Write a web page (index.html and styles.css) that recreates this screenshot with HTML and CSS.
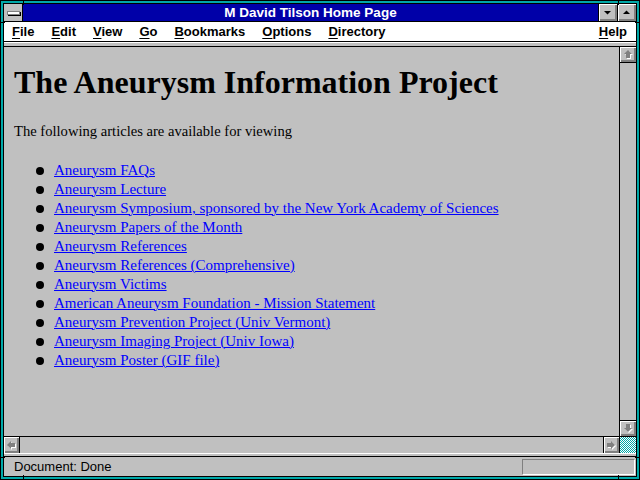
FILE: index.html
```html
<!DOCTYPE html>
<html lang="en">
  <head>
    <meta charset="UTF-8" />
    <title>M David Tilson Home Page</title>
    <link rel="stylesheet" href="styles.css">
  </head>
  <body>
    <div class="window">
      <span class="notch notch--top notch--left"></span>
      <span class="notch notch--top notch--right"></span>
      <span class="notch notch--bottom notch--left"></span>
      <span class="notch notch--bottom notch--right"></span>
      <span class="notch notch--side notch--upper notch--west"></span>
      <span class="notch notch--side notch--upper notch--east"></span>
      <span class="notch notch--side notch--lower notch--west"></span>
      <span class="notch notch--side notch--lower notch--east"></span>

      <div class="frame">
        <header class="titlebar">
          <div class="sysmenu"><span class="sysmenu__bar"></span></div>
          <div class="titlebar__title">M David Tilson Home Page</div>
          <div class="titlebar__btn">
            <svg width="18" height="17" viewBox="0 0 18 17"><polygon points="5,7 12,7 8.5,10.5" fill="#000"/></svg>
          </div>
          <div class="titlebar__btn">
            <svg width="18" height="17" viewBox="0 0 18 17"><polygon points="5,10 12,10 8.5,6.5" fill="#000"/></svg>
          </div>
        </header>

        <nav class="menubar">
          <span class="menubar__item"><u>F</u>ile</span>
          <span class="menubar__item"><u>E</u>dit</span>
          <span class="menubar__item"><u>V</u>iew</span>
          <span class="menubar__item"><u>G</u>o</span>
          <span class="menubar__item"><u>B</u>ookmarks</span>
          <span class="menubar__item"><u>O</u>ptions</span>
          <span class="menubar__item"><u>D</u>irectory</span>
          <span class="menubar__item menubar__item--help"><u>H</u>elp</span>
        </nav>
        <div class="toolbar_sep"></div>

        <div class="viewport">
          <main class="page">
            <h1 class="page__heading">The Aneurysm Information Project</h1>
            <p class="page__intro">The following articles are available for viewing</p>
            <ul class="page__list">
              <li class="page__item"><a class="page__link" href="#">Aneurysm FAQs</a></li>
              <li class="page__item"><a class="page__link" href="#">Aneurysm Lecture</a></li>
              <li class="page__item"><a class="page__link" href="#">Aneurysm Symposium, sponsored by the New York Academy of Sciences</a></li>
              <li class="page__item"><a class="page__link" href="#">Aneurysm Papers of the Month</a></li>
              <li class="page__item"><a class="page__link" href="#">Aneurysm References</a></li>
              <li class="page__item"><a class="page__link" href="#">Aneurysm References (Comprehensive)</a></li>
              <li class="page__item"><a class="page__link" href="#">Aneurysm Victims</a></li>
              <li class="page__item"><a class="page__link" href="#">American Aneurysm Foundation - Mission Statement</a></li>
              <li class="page__item"><a class="page__link" href="#">Aneurysm Prevention Project (Univ Vermont)</a></li>
              <li class="page__item"><a class="page__link" href="#">Aneurysm Imaging Project (Univ Iowa)</a></li>
              <li class="page__item"><a class="page__link" href="#">Aneurysm Poster (GIF file)</a></li>
            </ul>
          </main>
          <div class="vscroll">
            <div class="sbtn sbtn--up">
              <svg class="arrow" viewBox="0 0 15 15"><polygon transform="translate(1 1)" points="7,3 11,7 9,7 9,11 5,11 5,7 3,7" fill="#fff"/><polygon points="7,3 11,7 9,7 9,11 5,11 5,7 3,7" fill="#808080"/></svg>
            </div>
            <div class="vscroll__track"></div>
            <div class="sbtn sbtn--down">
              <svg class="arrow" viewBox="0 0 15 15"><polygon transform="translate(1 1)" points="7,11 11,7 9,7 9,3 5,3 5,7 3,7" fill="#fff"/><polygon points="7,11 11,7 9,7 9,3 5,3 5,7 3,7" fill="#808080"/></svg>
            </div>
          </div>
        </div>

        <div class="hscroll">
          <div class="sbtn sbtn--left">
            <svg class="arrow" viewBox="0 0 15 15"><polygon transform="translate(1 1)" points="3,7 7,3 7,5 11,5 11,9 7,9 7,11" fill="#fff"/><polygon points="3,7 7,3 7,5 11,5 11,9 7,9 7,11" fill="#808080"/></svg>
          </div>
          <div class="hscroll__track"></div>
          <div class="sbtn sbtn--right">
            <svg class="arrow" viewBox="0 0 15 15"><polygon transform="translate(1 1)" points="11,7 7,3 7,5 3,5 3,9 7,9 7,11" fill="#fff"/><polygon points="11,7 7,3 7,5 3,5 3,9 7,9 7,11" fill="#808080"/></svg>
          </div>
          <div class="hscroll__corner"></div>
        </div>
        <div class="status_sep"></div>

        <footer class="status">
          <span class="status__text">Document: Done</span>
          <span class="status__box"></span>
        </footer>
      </div>
    </div>
  </body>
</html>
```

FILE: styles.css
```css
:root {
  --color-black: #000;
  --color-white: #fff;
  --color-gray: #c0c0c0;
  --color-shadow: #808080;
  --color-teal: #00a8a8;
  --color-title: #0000a8;
  --color-link: #0000ff;
}
* {
  margin: 0;
  padding: 0;
  box-sizing: border-box;
}
body {
  width: 640px;
  height: 480px;
  overflow: hidden;
  background-color: var(--color-black);
}
/* 窓枠 */
.window {
  position: relative;
  width: 640px;
  height: 480px;
  padding: 2px;
  border: 1px solid var(--color-black);
  background-color: var(--color-teal);
}
.frame {
  display: flex;
  flex-direction: column;
  height: 100%;
  border: 1px solid var(--color-black);
  background-color: var(--color-gray);
  font-family: "Liberation Sans", Arial, sans-serif;
}
/* 枠の刻み */
.notch {
  position: absolute;
  background-color: var(--color-black);
}
.notch--top,
.notch--bottom {
  width: 1px;
  height: 4px;
}
.notch--top { top: 0; }
.notch--bottom { bottom: 0; }
.notch--left { left: 22px; }
.notch--right { left: 617px; }
.notch--side {
  width: 4px;
  height: 1px;
}
.notch--upper { top: 21px; }
.notch--lower { top: 456px; }
.notch--west { left: 0; }
.notch--east { right: 0; }
/* タイトルバー */
.titlebar {
  display: flex;
  flex: none;
  height: 18px;
  border-bottom: 1px solid var(--color-black);
  background-color: var(--color-title);
}
.sysmenu {
  display: flex;
  align-items: center;
  justify-content: center;
  width: 19px;
  border-right: 1px solid var(--color-black);
  background-color: var(--color-gray);
}
.sysmenu__bar {
  width: 13px;
  height: 4px;
  border: 1px solid var(--color-shadow);
  background-color: var(--color-white);
  box-shadow: 1px 1px 0 var(--color-black);
}
.titlebar__title {
  flex: 1;
  color: var(--color-white);
  font-size: 13.5px;
  font-weight: 700;
  line-height: 17px;
  text-align: center;
}
.titlebar__btn {
  width: 19px;
  border-left: 1px solid var(--color-black);
  background-color: var(--color-gray);
  box-shadow: inset 1px 1px 0 var(--color-white), inset -1px -1px 0 var(--color-shadow), inset -2px -2px 0 var(--color-shadow);
}
.titlebar__btn svg {
  display: block;
}
/* メニュー */
.menubar {
  display: flex;
  flex: none;
  align-items: center;
  gap: 17px;
  height: 20px;
  padding: 0 9px 0 8px;
  border-bottom: 1px solid var(--color-black);
  background-color: var(--color-white);
  font-size: 13px;
  font-weight: 700;
}
.menubar__item u {
  text-underline-offset: 2px;
}
.menubar__item--help {
  margin-left: auto;
}
.toolbar_sep {
  flex: none;
  height: 5px;
  border-top: 1px solid var(--color-white);
  border-bottom: 1px solid var(--color-black);
}
/* 本文 */
.viewport {
  display: flex;
  flex: 1;
  min-height: 0;
}
.page {
  flex: 1;
  padding: 0 10px;
  overflow: hidden;
  font-family: "Liberation Serif", "Times New Roman", serif;
  color: var(--color-black);
}
.page__heading {
  margin-top: 17px;
  font-size: 32px;
  font-weight: 700;
  line-height: 37px;
}
.page__intro {
  margin-top: 21px;
  font-size: 14.6px;
  line-height: 19px;
}
.page__list {
  margin-top: 20px;
  list-style: none;
}
.page__item {
  display: flex;
  align-items: center;
  font-size: 15px;
  line-height: 19px;
}
.page__item::before {
  content: '';
  flex: none;
  width: 8px;
  height: 8px;
  margin: 0 10px 0 22px;
  border-radius: 50%;
  background-color: var(--color-black);
}
.page__link {
  color: var(--color-link);
  text-decoration: underline;
  text-decoration-thickness: 1px;
}
/* スクロールバー */
.vscroll {
  display: flex;
  flex-direction: column;
  width: 17px;
  border-left: 1px solid var(--color-black);
}
.vscroll__track,
.hscroll__track {
  flex: 1;
  background-color: var(--color-gray);
}
.sbtn {
  display: flex;
  align-items: center;
  justify-content: center;
  background-color: var(--color-gray);
  box-shadow: inset 1px 1px 0 var(--color-white), inset -1px -1px 0 var(--color-shadow), inset -2px -2px 0 var(--color-shadow);
}
.sbtn--up {
  height: 16px;
  border-bottom: 1px solid var(--color-black);
}
.sbtn--down {
  height: 16px;
  border-top: 1px solid var(--color-black);
}
.sbtn--left {
  width: 16px;
  border-right: 1px solid var(--color-black);
}
.sbtn--right {
  width: 16px;
  border-left: 1px solid var(--color-black);
}
.arrow {
  display: block;
  width: 15px;
  height: 15px;
}
.hscroll {
  display: flex;
  flex: none;
  height: 17px;
  border-top: 1px solid var(--color-black);
}
.hscroll__corner {
  width: 17px;
  border-left: 1px solid var(--color-black);
  background-image: conic-gradient(var(--color-teal) 25%, var(--color-white) 0 50%, var(--color-teal) 0 75%, var(--color-white) 0);
  background-size: 2px 2px;
}
.status_sep {
  flex: none;
  height: 4px;
  border-top: 1px solid var(--color-white);
  border-bottom: 1px solid var(--color-black);
}
/* ステータスバー */
.status {
  display: flex;
  flex: none;
  align-items: center;
  height: 19px;
  padding-left: 10px;
  font-size: 13px;
}
.status__box {
  width: 113px;
  height: 16px;
  margin: 0 1px 0 auto;
  border: 1px solid;
  border-color: var(--color-shadow) var(--color-white) var(--color-white) var(--color-shadow);
}
```
